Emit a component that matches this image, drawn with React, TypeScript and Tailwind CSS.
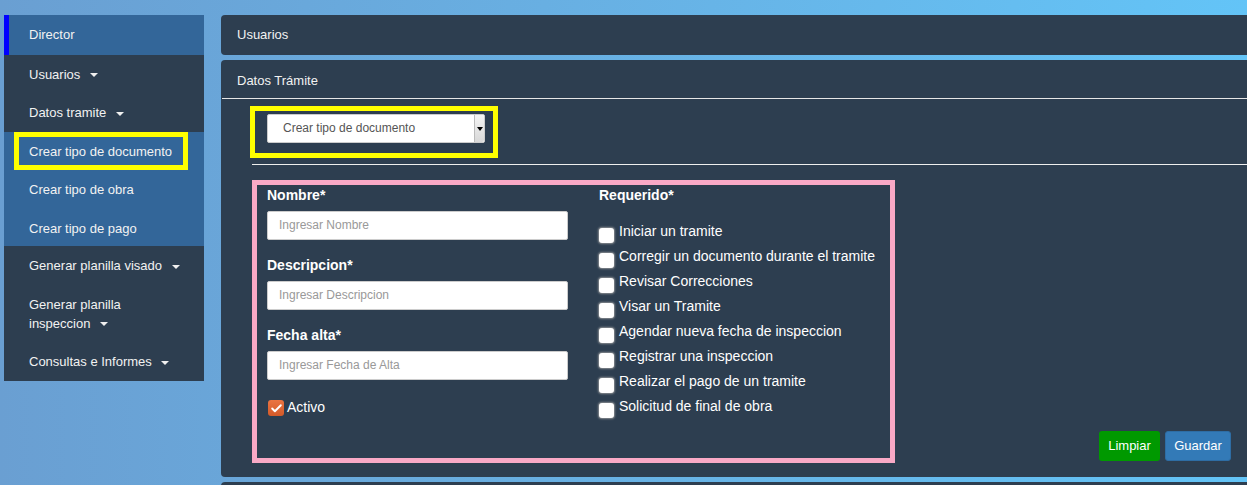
import { Check } from 'lucide-react';

const Caret = () => (
  <span className="ml-[6px] inline-block align-middle w-0 h-0 border-t-[4px] border-t-[#f0f0f0] border-x-[4px] border-x-transparent" />
);

const requeridos = [
  'Iniciar un tramite',
  'Corregir un documento durante el tramite',
  'Revisar Correcciones',
  'Visar un Tramite',
  'Agendar nueva fecha de inspeccion',
  'Registrar una inspeccion',
  'Realizar el pago de un tramite',
  'Solicitud de final de obra',
];

function Sidebar() {
  return (
    <aside className="ml-[4px] w-[200px] self-start text-[13px] leading-[1.428571] text-[#f2f2f2]">
      {/* Director */}
      <div className="bg-[#336699] border-l-[5px] border-[#0000ff] pl-[20px] pr-[15px] pt-[11px] pb-[10px]">Director</div>
      <div className="bg-[#2d3e50] pl-[25px] pr-[15px] pt-[11px] pb-[9px]">
        Usuarios <Caret />
      </div>
      <div className="bg-[#2d3e50] pl-[25px] pr-[15px] pt-[11px] pb-[9px]">
        Datos tramite <Caret />
      </div>
      <div className="bg-[#336699] pl-[10px] pr-[16px]">
        <div className="border-[5px] border-[#ffff00] pl-[10px] pt-[6px] pb-[4px]">Crear tipo de documento</div>
      </div>
      <div className="bg-[#336699] pl-[25px] pr-[15px] pt-[11px] pb-[9px]">Crear tipo de obra</div>
      <div className="bg-[#336699] pl-[25px] pr-[15px] pt-[11px] pb-[8px]">Crear tipo de pago</div>
      <div className="bg-[#2d3e50] pl-[25px] pr-[15px] pt-[11px] pb-[9px]">
        Generar planilla visado <Caret />
      </div>
      <div className="bg-[#2d3e50] pl-[25px] pr-[15px] pt-[11px] pb-[9px]">
        Generar planilla
        <br />
        inspeccion <Caret />
      </div>
      <div className="bg-[#2d3e50] pl-[25px] pr-[15px] pt-[11px] pb-[9px]">
        Consultas e Informes <Caret />
      </div>
    </aside>
  );
}

function Field({ label, placeholder, first }: { label: string; placeholder: string; first?: boolean }) {
  return (
    <div className={first ? '' : 'mt-[15px]'}>
      <div className="text-[14px] leading-[20px] font-bold text-white">{label}</div>
      <div className="mt-[6px] h-[29px] w-[301px] bg-white rounded-[2px] border border-[#ccc] pl-[11px] flex items-center text-[12px] text-[#999]">
        {placeholder}
      </div>
    </div>
  );
}

function App() {
  return (
    <div className="h-[485px] overflow-hidden bg-linear-to-r from-[#6a9fd2] to-[#63c4f7] pt-[15px] flex font-['Liberation_Sans',Arial,sans-serif]">
      <Sidebar />

      <main className="ml-[17px] flex-1 flex flex-col gap-[5px] text-[13px] leading-[1.428571] text-[#f2f2f2]">
        {/* Usuarios panel */}
        <div className="shrink-0 h-[40px] bg-[#2d3e50] rounded-l-[4px] px-[16px] pt-[1px] flex items-center">Usuarios</div>

        {/* Datos Trámite panel */}
        <div className="shrink-0 bg-[#2d3e50] rounded-l-[4px]">
          <div className="h-[39px] ml-[1px] pl-[15px] pt-[4px] border-b border-[#e6e6e6] flex items-center">Datos Trámite</div>

          <div className="pl-[29px] pt-[7px] pb-[14px]">
            <div className="w-[248px] h-[52px] border-[5px] border-[#ffff00] pl-[12px] pt-[3px]">
              <div className="h-[29px] w-[218px] bg-white rounded-[2px] border border-[#ccc] flex items-center">
                <span className="flex-1 pl-[15px] text-[12px] text-[#555]">Crear tipo de documento</span>
                <span className="w-[10px] h-[27px] bg-linear-to-b from-[#f4f4f4] to-[#d8d8d8] border-l border-[#bbb] rounded-r-[2px] flex items-center justify-center">
                  <span className="w-0 h-0 border-t-[4px] border-t-black border-x-[3px] border-x-transparent" />
                </span>
              </div>
            </div>

            <div className="mt-[6px] ml-[2px] border-t border-[#eeeeee]" />

            <div className="mt-[15px] ml-[2px] pr-[16px] flex">
              {/* form */}
              <div className="w-[643px] h-[283px] border-[5px] border-[#f9a9c6] pl-[10px] flex">
                <div>
                  <Field first label="Nombre*" placeholder="Ingresar Nombre" />
                  <Field label="Descripcion*" placeholder="Ingresar Descripcion" />
                  <Field label="Fecha alta*" placeholder="Ingresar Fecha de Alta" />
                  <div className="mt-[17px] flex items-start">
                    <span className="mt-[3px] ml-[1px] w-[16px] h-[16px] rounded-[3px] bg-linear-to-b from-[#ea7442] to-[#d45a28] flex items-center justify-center">
                      <Check className="w-[13px] h-[13px] text-white" strokeWidth={3.5} />
                    </span>
                    <span className="ml-[3px] text-[14px] leading-[20px] text-white">Activo</span>
                  </div>
                </div>

                <div className="ml-[31px]">
                  <div className="text-[14px] leading-[20px] font-bold text-white">Requerido*</div>
                  <div className="mt-[16px]">
                    {requeridos.map(r => (
                      <div key={r} className="h-[25px] flex items-start">
                        <span className="mt-[7px] w-[15px] h-[15px] rounded-[3px] bg-white shadow-[0_0_2px_1px_rgba(160,160,160,0.8)]" />
                        <span className="ml-[5px] text-[14px] leading-[20px] text-white">{r}</span>
                      </div>
                    ))}
                  </div>
                </div>
              </div>

              {/* buttons */}
              <div className="ml-auto self-end mb-[2px] flex gap-[5px] text-[13px] text-white">
                <button className="h-[30px] w-[61px] bg-[#009900] rounded-[3px]">Limpiar</button>
                <button className="h-[30px] w-[66px] bg-[#337ab7] border border-[#2e6da4] rounded-[3px]">Guardar</button>
              </div>
            </div>
          </div>
        </div>

        <div className="shrink-0 bg-[#2d3e50] rounded-l-[4px] h-[60px]" />
      </main>
    </div>
  );
}

export default App;
